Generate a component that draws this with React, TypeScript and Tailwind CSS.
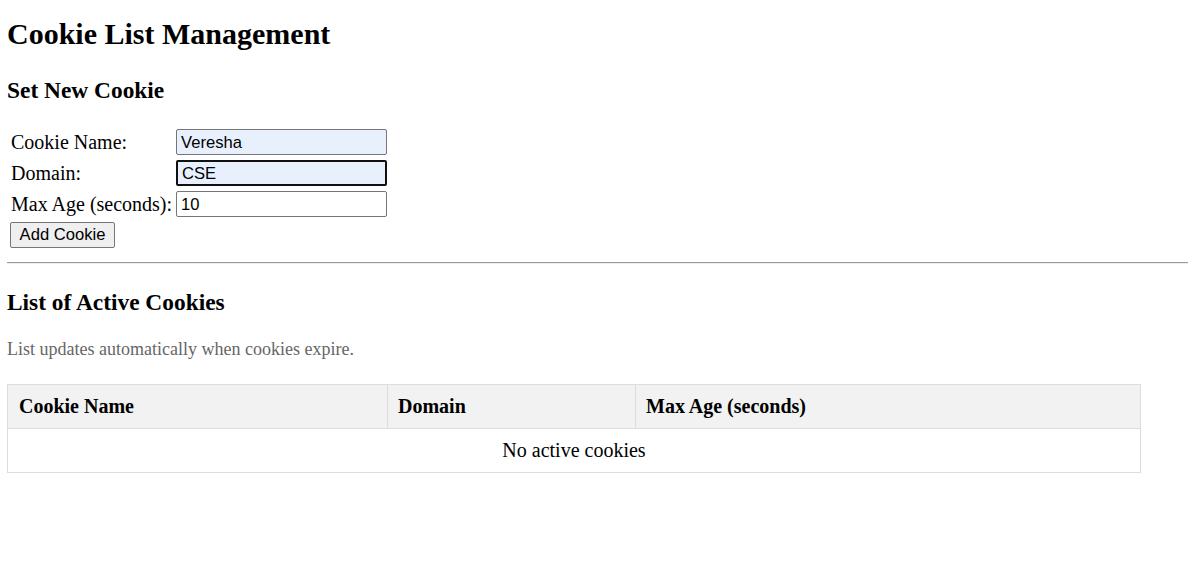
import { useState } from "react";

const serif = "font-['Liberation_Serif','Times_New_Roman',serif]";
const sans = "font-['Liberation_Sans',Arial,sans-serif]";

const inputBase = `${sans} h-[26px] w-[211px] rounded-[2px] px-[4px] pt-[1px] text-[16.6px] leading-none text-black outline-none`;

const App = () => {
  const [name, setName] = useState("Veresha");
  const [domain, setDomain] = useState("CSE");
  const [maxAge, setMaxAge] = useState("10");

  return (
    <div className={`${serif} min-h-screen bg-white text-black`}>
      <h1 className="mx-[7px] pt-[19px] text-[30px] font-bold leading-none">
        Cookie List Management
      </h1>

      <h2 className="mx-[7px] mt-[30px] text-[23.4px] font-bold leading-none">
        Set New Cookie
      </h2>

      <div className="mt-[27px] ml-[10px] grid grid-cols-[166px_211px] gap-y-[5px] text-[20px] leading-[23px]">
        <label className="flex items-center pl-[1px]">Cookie Name:</label>
        <input
          value={name}
          onChange={(e) => setName(e.target.value)}
          className={`${inputBase} border border-[#767676] bg-[#e8f0fe]`}
        />
        <label className="flex items-center pl-[1px]">Domain:</label>
        <input
          value={domain}
          onChange={(e) => setDomain(e.target.value)}
          className={`${inputBase} border-2 border-[#101010] bg-[#e8f0fe] px-[3px]`}
        />
        <label className="flex items-center pl-[1px]">Max Age (seconds):</label>
        <input
          value={maxAge}
          onChange={(e) => setMaxAge(e.target.value)}
          className={`${inputBase} border border-[#767676] bg-white`}
        />
      </div>

      <button
        className={`${sans} ml-[10px] mt-[5px] h-[26px] w-[105px] rounded-[2px] border border-[#767676] bg-[#efefef] text-[16.6px] leading-none`}
      >
        Add Cookie
      </button>

      <hr className="ml-[7px] mt-[14px] h-0 border-t border-b border-t-[#9a9a9a] border-b-[#eeeeee]" />

      <h2 className="mx-[7px] mt-[27px] text-[23.4px] font-bold leading-none">
        List of Active Cookies
      </h2>

      <p className="mx-[7px] mt-[25px] text-[18px] leading-none text-[#666666]">
        List updates automatically when cookies expire.
      </p>

      <table className="ml-[7px] mt-[26px] w-[1134px] border-collapse text-[20px]">
        <thead>
          <tr className="h-[44px] bg-[#f2f2f2]">
            <th className="w-[380px] border border-[#dddddd] px-[11px] text-left font-bold">
              Cookie Name
            </th>
            <th className="w-[248px] border border-[#dddddd] px-[10px] text-left font-bold">
              Domain
            </th>
            <th className="border border-[#dddddd] px-[10px] text-left font-bold">
              Max Age (seconds)
            </th>
          </tr>
        </thead>
        <tbody>
          <tr className="h-[44px]">
            <td colSpan={3} className="border border-[#dddddd] text-center">
              No active cookies
            </td>
          </tr>
        </tbody>
      </table>
    </div>
  );
};

export default App;
